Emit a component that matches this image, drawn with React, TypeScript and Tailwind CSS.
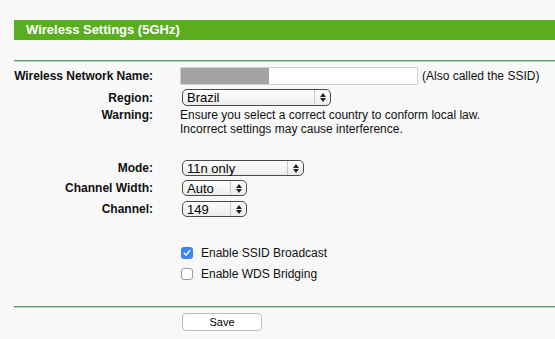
import React from "react";

function Select({ value, width }: { value: string; width: string }) {
  return (
    <div
      className={`${width} h-full flex items-stretch rounded-[5px] border border-[#4a4a4a] bg-gradient-to-b from-white to-[#ececec] text-[13px] text-black`}
    >
      <span className="flex-1 pl-[4px] flex items-center leading-none">{value}</span>
      <span className="w-[16px] border-l border-[#c8c8c8] flex flex-col items-center justify-center gap-[1px]">
        <svg width="6" height="4" viewBox="0 0 6 4">
          <path d="M3 0L6 4H0z" fill="#222" />
        </svg>
        <svg width="6" height="4" viewBox="0 0 6 4">
          <path d="M0 0H6L3 4z" fill="#222" />
        </svg>
      </span>
    </div>
  );
}

function Row({
  label,
  className,
  children,
}: {
  label: string;
  className: string;
  children: React.ReactNode;
}) {
  return (
    <div className={`flex ${className}`}>
      <div className="w-[139px] shrink-0 whitespace-nowrap text-right font-bold flex items-center justify-end">
        {label}
      </div>
      <div className="ml-[27px] flex items-center h-full">{children}</div>
    </div>
  );
}

export default function App() {
  return (
    <div
      className="w-[555px] h-[339px] bg-[#f8f8f8] text-[12px] text-[#111] overflow-hidden"
      style={{ fontFamily: '"Liberation Sans", Arial, sans-serif' }}
    >
      <div className="ml-[14px] pt-[20px]">
        <div className="h-[20px] bg-[#5aad1e] flex items-center pl-[12px] text-white font-bold text-[13px]">
          Wireless Settings (5GHz)
        </div>
        <div className="mt-[20px] h-[2px] border-t border-[#5f9a72] bg-[#b7d2bf]" />
      </div>

      <div className="pl-[14px]">
        <Row label="Wireless Network Name:" className="mt-[5px] h-[18px] tracking-[-0.05px]">
          <div className="w-[238px] h-[18px] border border-[#d0d0d0] bg-white flex">
            <div className="w-[88px] h-full bg-[#a3a3a3]" />
          </div>
          <span className="ml-[4px] tracking-normal">(Also called the SSID)</span>
        </Row>

        <Row label="Region:" className="mt-[4px] h-[17px]">
          <div className="ml-[2px] h-full flex">
            <Select value="Brazil" width="w-[149px]" />
          </div>
        </Row>

        <div className="flex mt-[2px] h-[29px]">
          <div className="w-[139px] shrink-0 text-right font-bold leading-[14px]">Warning:</div>
          <div className="ml-[27px] leading-[14px]">
            Ensure you select a correct country to conform local law.
            <br />
            Incorrect settings may cause interference.
          </div>
        </div>

        <Row label="Mode:" className="mt-[23px] h-[16px]">
          <div className="ml-[2px] h-full flex">
            <Select value="11n only" width="w-[122px]" />
          </div>
        </Row>

        <Row label="Channel Width:" className="mt-[4px] h-[16px]">
          <div className="ml-[2px] h-full flex">
            <Select value="Auto" width="w-[65px]" />
          </div>
        </Row>

        <Row label="Channel:" className="mt-[5px] h-[16px]">
          <div className="ml-[2px] h-full flex">
            <Select value="149" width="w-[65px]" />
          </div>
        </Row>

        <div className="mt-[26px] ml-[166px] flex flex-col">
          <label className="h-[20px] flex items-center">
            <span className="w-[12px] h-[12px] ml-[1px] rounded-[3px] bg-[#3b86f7] flex items-center justify-center">
              <svg width="8" height="8" viewBox="0 0 8 8">
                <path d="M1.3 4.3L3.2 6.2L6.7 1.6" stroke="white" strokeWidth="1.4" fill="none" strokeLinecap="round" strokeLinejoin="round" />
              </svg>
            </span>
            <span className="ml-[8px]">Enable SSID Broadcast</span>
          </label>
          <label className="h-[20px] mt-[1px] flex items-center">
            <span className="w-[12px] h-[12px] ml-[1px] rounded-[3px] bg-white border border-[#9a9a9a]" />
            <span className="ml-[8px]">Enable WDS Bridging</span>
          </label>
        </div>
      </div>

      <div className="ml-[14px] mt-[22px] h-[2px] border-t border-[#5f9a72] bg-[#b7d2bf]" />

      <div className="ml-[182px] mt-[5px] w-[80px] h-[18px] rounded-[4px] border border-[#bdbdbd] bg-white flex items-center justify-center text-[11px] text-black">
        Save
      </div>
    </div>
  );
}
